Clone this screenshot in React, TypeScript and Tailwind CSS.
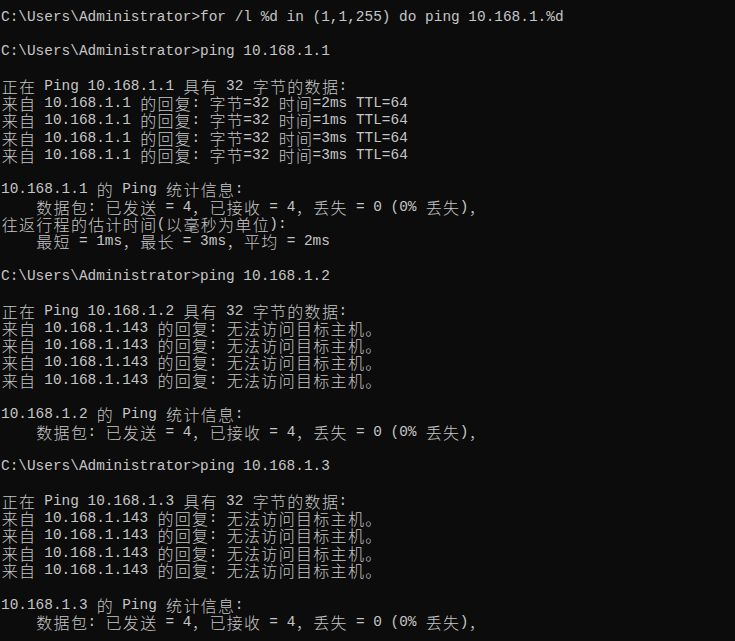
import React from 'react';

const lines: string[] = [
  'C:\\Users\\Administrator>for /l %d in (1,1,255) do ping 10.168.1.%d',
  '',
  'C:\\Users\\Administrator>ping 10.168.1.1',
  '',
  '正在 Ping 10.168.1.1 具有 32 字节的数据:',
  '来自 10.168.1.1 的回复: 字节=32 时间=2ms TTL=64',
  '来自 10.168.1.1 的回复: 字节=32 时间=1ms TTL=64',
  '来自 10.168.1.1 的回复: 字节=32 时间=3ms TTL=64',
  '来自 10.168.1.1 的回复: 字节=32 时间=3ms TTL=64',
  '',
  '10.168.1.1 的 Ping 统计信息:',
  '    数据包: 已发送 = 4，已接收 = 4，丢失 = 0 (0% 丢失)，',
  '往返行程的估计时间(以毫秒为单位):',
  '    最短 = 1ms，最长 = 3ms，平均 = 2ms',
  '',
  'C:\\Users\\Administrator>ping 10.168.1.2',
  '',
  '正在 Ping 10.168.1.2 具有 32 字节的数据:',
  '来自 10.168.1.143 的回复: 无法访问目标主机。',
  '来自 10.168.1.143 的回复: 无法访问目标主机。',
  '来自 10.168.1.143 的回复: 无法访问目标主机。',
  '来自 10.168.1.143 的回复: 无法访问目标主机。',
  '',
  '10.168.1.2 的 Ping 统计信息:',
  '    数据包: 已发送 = 4，已接收 = 4，丢失 = 0 (0% 丢失)，',
  '',
  'C:\\Users\\Administrator>ping 10.168.1.3',
  '',
  '正在 Ping 10.168.1.3 具有 32 字节的数据:',
  '来自 10.168.1.143 的回复: 无法访问目标主机。',
  '来自 10.168.1.143 的回复: 无法访问目标主机。',
  '来自 10.168.1.143 的回复: 无法访问目标主机。',
  '来自 10.168.1.143 的回复: 无法访问目标主机。',
  '',
  '10.168.1.3 的 Ping 统计信息:',
  '    数据包: 已发送 = 4，已接收 = 4，丢失 = 0 (0% 丢失)，',
];

const isWide = (ch: string) => ch.charCodeAt(0) > 0x2e80;

// split a line into ascii runs and wide (double cell) chars
function splitRuns(line: string) {
  const runs: { text: string; wide: boolean }[] = [];
  for (const ch of line) {
    const wide = isWide(ch);
    const last = runs[runs.length - 1];
    if (!wide && last && !last.wide) {
      last.text += ch;
    } else {
      runs.push({ text: ch, wide });
    }
  }
  return runs;
}

function ConsoleLine({ text }: { text: string }) {
  return (
    <div className="h-[17.3px] leading-[17.3px] whitespace-pre flex items-center">
      {splitRuns(text).map((run, i) =>
        run.wide ? (
          <span
            key={i}
            className="inline-flex justify-center w-[17.32px] h-[17.3px] leading-[17.3px] text-[16px] font-['Noto_Sans_CJK_SC',sans-serif] font-light"
          >
            {run.text}
          </span>
        ) : (
          <span key={i} className="text-[14.43px] font-['Liberation_Mono',monospace]">
            {run.text}
          </span>
        )
      )}
    </div>
  );
}

export default function App() {
  return (
    <div className="w-[735px] h-[641px] overflow-hidden bg-[#0c0c0c] text-[#c6c6c6] pt-[8.5px] pl-px">
      {lines.map((line, i) => (
        <ConsoleLine key={i} text={line} />
      ))}
    </div>
  );
}
